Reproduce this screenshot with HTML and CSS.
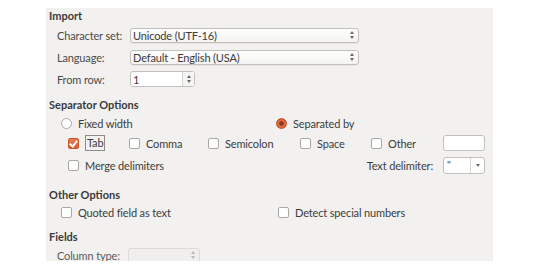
FILE: index.html
```html
<!DOCTYPE html>
<html>
<head>
<meta charset="utf-8">
<link rel="stylesheet" href="styles.css">
</head>
<body>
<div class="panel">
  <div class="heading h-import">Import</div>
  <div class="frow">
    <span class="flabel">Character set:</span>
    <div class="combo w-wide"><span class="val">Unicode (UTF-16)</span><span class="arrows"><i class="up"></i><i class="dn"></i></span></div>
  </div>
  <div class="frow">
    <span class="flabel">Language:</span>
    <div class="combo w-wide"><span class="val">Default - English (USA)</span><span class="arrows"><i class="up"></i><i class="dn"></i></span></div>
  </div>
  <div class="frow">
    <span class="flabel">From row:</span>
    <div class="spin"><span class="val">1</span><span class="spinbtn"><i class="up"></i><i class="dn"></i></span></div>
  </div>

  <div class="heading h-sep">Separator Options</div>
  <div class="radiorow">
    <label class="opt r1"><span class="radio"></span>Fixed width</label>
    <label class="opt"><span class="radio on"></span>Separated by</label>
  </div>
  <div class="checkrow">
    <label class="opt c1"><span class="check on"></span><span class="focus">Tab</span></label>
    <label class="opt c2"><span class="check"></span>Comma</label>
    <label class="opt c3"><span class="check"></span>Semicolon</label>
    <label class="opt c4"><span class="check"></span>Space</label>
    <label class="opt c5"><span class="check"></span>Other</label>
    <div class="entry"></div>
  </div>
  <div class="mergerow">
    <label class="opt"><span class="check"></span>Merge delimiters</label>
    <span class="tdlabel">Text delimiter:</span>
    <div class="dcombo"><span class="val">"</span><span class="dbtn"><i class="dn"></i></span></div>
  </div>

  <div class="heading h-other">Other Options</div>
  <div class="otherrow">
    <label class="opt o1"><span class="check"></span>Quoted field as text</label>
    <label class="opt"><span class="check"></span>Detect special numbers</label>
  </div>

  <div class="heading h-fields">Fields</div>
  <div class="frow coltype">
    <span class="flabel dim">Column type:</span>
    <div class="combo w-small disabled"><span class="val"></span><span class="arrows"><i class="up"></i><i class="dn"></i></span></div>
  </div>
</div>
</body>
</html>
```

FILE: styles.css
```css
html, body {
  margin: 0;
  padding: 0;
  background: #ffffff;
}
body {
  font-family: "Lato", "Open Sans", sans-serif;
  font-size: 11px;
  letter-spacing: -0.15px;
  color: #3c3c3c;
  white-space: nowrap;
}
.panel {
  margin: 8px 0 0 46px;
  width: 447px;
  height: 253px;
  background: #f2f1f0;
  overflow: hidden;
  padding-left: 3px;
  padding-right: 8px;
  box-sizing: border-box;
}
.heading {
  font-weight: bold;
  font-size: 11px;
  letter-spacing: 0;
  color: #3a3a3a;
  height: 16px;
  line-height: 16px;
}
.h-sep { margin-top: 7px; }
.h-other { margin-top: 10px; }
.h-fields { margin-top: 8px; }

.frow {
  display: flex;
  align-items: center;
  height: 22px;
  padding-left: 8px;
}
.flabel {
  width: 73px;
  color: #4a4a4a;
}
.flabel.dim { color: #5a5a5a; width: 71px; }

.combo {
  height: 15px;
  box-sizing: border-box;
  border: 1px solid #c2c0bb;
  border-radius: 3px;
  background: linear-gradient(#ffffff, #f4f3f1);
  display: flex;
  align-items: center;
  box-shadow: 0 1px 0 rgba(0,0,0,0.05);
}
.w-wide { width: 229px; }
.w-small { width: 72px; }
.combo .val {
  flex: 1;
  padding-left: 2px;
  line-height: 13px;
  color: #3a3a3a;
}
.combo .arrows {
  width: 12px;
  display: flex;
  flex-direction: column;
  align-items: center;
  gap: 2px;
}
i.up, i.dn {
  display: block;
  width: 0;
  height: 0;
  border-left: 2px solid transparent;
  border-right: 2px solid transparent;
}
i.up { border-bottom: 3px solid #6a6a6a; }
i.dn { border-top: 3px solid #6a6a6a; }

.combo.disabled {
  border-color: #dcdad6;
  background: #f0efed;
  box-shadow: none;
}
.combo.disabled i.up { border-bottom-color: #b8b8b8; }
.combo.disabled i.dn { border-top-color: #b8b8b8; }
.coltype { height: 20px; }

.spin {
  width: 65px;
  height: 16px;
  box-sizing: border-box;
  border: 1px solid #c2c0bb;
  border-radius: 3px;
  background: #ffffff;
  display: flex;
  align-items: center;
}
.spin .val { flex: 1; padding-left: 2px; }
.spin .spinbtn {
  width: 11px;
  height: 14px;
  border-left: 1px solid #d8d6d2;
  display: flex;
  flex-direction: column;
  align-items: center;
  justify-content: center;
  gap: 2px;
  background: #f6f5f4;
}

.opt {
  display: flex;
  align-items: center;
  color: #3c3c3c;
}
.radiorow {
  display: flex;
  align-items: center;
  height: 18px;
  margin-top: 1px;
  padding-left: 12px;
}
.r1 { width: 215px; }
.radio {
  width: 9px;
  height: 9px;
  border: 1px solid #aaa8a4;
  border-radius: 50%;
  background: #ffffff;
  margin-right: 6px;
  box-sizing: content-box;
}
.radio.on {
  background: radial-gradient(circle, #8a3a1e 0 2px, #e8734a 2.5px, #d65a30 5px);
  border-color: #c2522c;
}
.checkrow {
  display: flex;
  align-items: center;
  height: 22px;
  padding-left: 19px;
}
.c1 { width: 61px; }
.c2 { width: 79px; }
.c3 { width: 92px; }
.c4 { width: 71px; }
.c5 { width: 72px; }
.check {
  width: 9px;
  height: 9px;
  border: 1px solid #aaa8a4;
  border-radius: 2px;
  background: #ffffff;
  margin-right: 6px;
  position: relative;
  flex: none;
}
.check.on {
  background: linear-gradient(#ee7a50, #dc5e32);
  border-color: #c8522a;
}
.check.on::after {
  content: "";
  position: absolute;
  left: 2px;
  top: 0px;
  width: 3px;
  height: 6px;
  border-right: 2px solid #ffffff;
  border-bottom: 2px solid #ffffff;
  transform: rotate(40deg);
}
.focus {
  border: 1px solid #8c8c8c;
  padding: 0 1px;
  line-height: 14px;
}
.entry {
  width: 42px;
  height: 16px;
  box-sizing: border-box;
  border: 1px solid #c2c0bb;
  border-radius: 3px;
  background: #ffffff;
}
.mergerow {
  display: flex;
  align-items: center;
  height: 23px;
  padding-left: 19px;
}
.tdlabel {
  margin-left: auto;
  margin-right: 10px;
  color: #3c3c3c;
}
.dcombo {
  width: 42px;
  height: 17px;
  box-sizing: border-box;
  border: 1px solid #c2c0bb;
  border-radius: 3px;
  background: #ffffff;
  display: flex;
  align-items: stretch;
}
.dcombo .val {
  flex: 1;
  padding-left: 3px;
  line-height: 12px;
  font-size: 10px;
}
.dcombo .dbtn {
  width: 13px;
  border-left: 1px solid #d8d6d2;
  display: flex;
  align-items: center;
  justify-content: center;
}
.otherrow {
  display: flex;
  align-items: center;
  height: 18px;
  padding-left: 12px;
}
.o1 { width: 217px; }
```
